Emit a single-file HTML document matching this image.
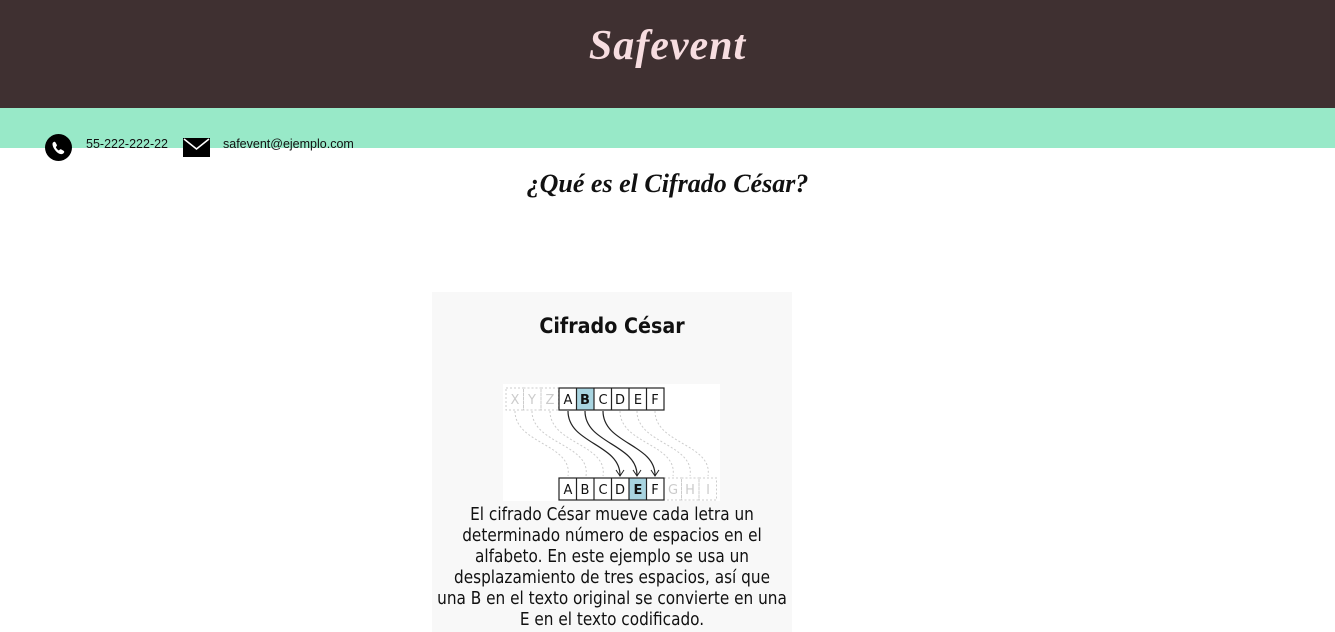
<!DOCTYPE html>
<html><head><meta charset="utf-8"><style>
body{margin:0;width:1335px;height:632px;overflow:hidden;background:#fff;position:relative;font-family:"Liberation Sans",sans-serif}
.hdr{position:absolute;left:0;top:0;width:1335px;height:108px;background:#3f3031}
.hdr h1{margin:0;position:absolute;left:0;width:1335px;top:22px;text-align:center;color:#f7dde0;font:italic bold 42px "Liberation Serif",serif;letter-spacing:1px}
.mint{position:absolute;left:0;top:108px;width:1335px;height:40px;background:#98e9c8}
.c{position:absolute;font-size:12.5px;color:#111;top:137px}
h2{position:absolute;margin:0;left:0;width:1335px;top:169px;text-align:center;font:italic bold 26px "Liberation Serif",serif;color:#111}
.panel{position:absolute;left:432px;top:292px;width:360px;height:340px;background:#f8f8f8}
.panel .t{position:absolute;left:0;width:360px;top:22px;text-align:center;font:bold 21px "DejaVu Sans",sans-serif;color:#111;transform:scaleX(0.91)}
.panel .p{position:absolute;left:180px;width:max-content;top:212px;text-align:center;white-space:nowrap;font:18px/21px "DejaVu Sans",sans-serif;color:#111;transform:translateX(-50%) scaleX(0.85)}
</style></head><body>
<div class="hdr"><h1>Safevent</h1></div>
<div class="mint"></div>
<svg style="position:absolute;left:45px;top:134px" width="27" height="27" viewBox="0 0 27 27"><circle cx="13.5" cy="13.5" r="13.5" fill="#000"/><path d="M8 8.5c1-1 2-1 2.5 0l1.3 2.3c.4.8 0 1.3-.6 1.8-.5.4-.3 1 .3 1.8l1.2 1.3c.8.7 1.3.8 1.7.3.5-.6 1-1 1.8-.6l2.3 1.3c1 .5 1 1.5 0 2.5-1.5 1.5-4 1.3-7-1.5S6.5 10 8 8.5z" fill="#fff"/></svg>
<div class="c" style="left:86px">55-222-222-22</div>
<svg style="position:absolute;left:183px;top:138px" width="27" height="19" viewBox="0 0 27 19"><rect width="27" height="19" fill="#000"/><path d="M1 1l12.5 10L26 1" stroke="#fff" stroke-width="1.6" fill="none"/></svg>
<div class="c" style="left:223px">safevent@ejemplo.com</div>
<h2>¿Qué es el Cifrado César?</h2>
<div class="panel">
<div class="t">Cifrado César</div>
<svg style="position:absolute;left:71px;top:92px" width="217" height="117" viewBox="0 0 217 117">
<rect width="217" height="117" fill="#fff"/>
<g font-family="DejaVu Sans,sans-serif" font-size="13" text-anchor="middle">
<g stroke="#ccc" stroke-dasharray="2 2" fill="none">
<rect x="3" y="4" width="17.5" height="22"/><rect x="20.5" y="4" width="17.5" height="22"/><rect x="38" y="4" width="17.5" height="22"/>
<rect x="161" y="94" width="17.5" height="22"/><rect x="178.5" y="94" width="17.5" height="22"/><rect x="196" y="94" width="17.5" height="22"/>
<path d="M12 27C12 60 70 60 65 92M29 27C29 60 88 60 83 92M47 27C47 60 105 60 100 92M117 27C117 60 175 60 170 92M134 27C134 60 192 60 187 92M152 27C152 60 210 60 205 92"/>
</g>
<g fill="#ccc"><text x="12" y="20">X</text><text x="29" y="20">Y</text><text x="47" y="20">Z</text><text x="170" y="110">G</text><text x="187" y="110">H</text><text x="205" y="110">I</text></g>
<rect x="73.5" y="4" width="17.5" height="22" fill="#a8d4e0"/><rect x="126" y="94" width="17.5" height="22" fill="#a8d4e0"/>
<g stroke="#222" fill="none" stroke-width="1.2">
<rect x="56" y="4" width="105" height="22"/><path d="M73.5 4v22M91 4v22M108.5 4v22M126 4v22M143.5 4v22"/>
<rect x="56" y="94" width="105" height="22"/><path d="M73.5 94v22M91 94v22M108.5 94v22M126 94v22M143.5 94v22"/>
<path d="M65 27C65 60 118 60 117 92M82 27C82 60 135 60 134 92M100 27C100 60 153 60 152 92"/>
</g>
<g fill="#111"><path d="M113 86l4 6 4-6M130 86l4 6 4-6M148 86l4 6 4-6" stroke="#222" fill="none"/></g>
<g fill="#111"><text x="65" y="20">A</text><text x="82" y="20" font-weight="bold">B</text><text x="100" y="20">C</text><text x="117" y="20">D</text><text x="135" y="20">E</text><text x="152" y="20">F</text>
<text x="65" y="110">A</text><text x="82" y="110">B</text><text x="100" y="110">C</text><text x="117" y="110">D</text><text x="135" y="110" font-weight="bold">E</text><text x="152" y="110">F</text></g>
</g></svg>
<div class="p">El cifrado César mueve cada letra un<br>determinado número de espacios en el<br>alfabeto. En este ejemplo se usa un<br>desplazamiento de tres espacios, así que<br>una B en el texto original se convierte en una<br>E en el texto codificado.</div>
</div>
</body></html>
